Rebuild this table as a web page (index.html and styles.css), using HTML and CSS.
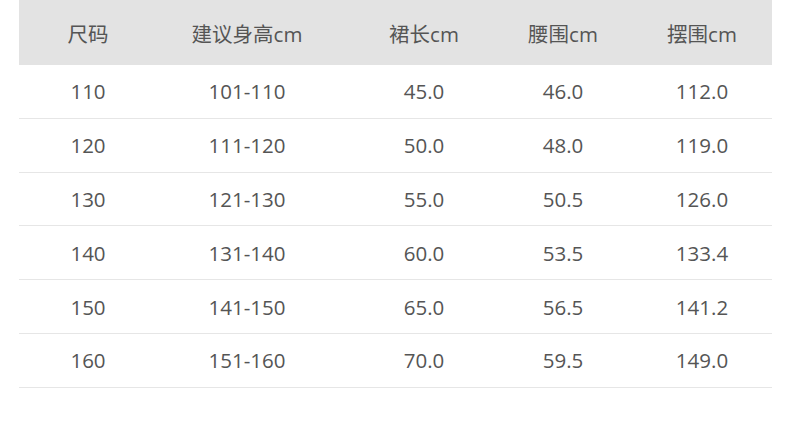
FILE: index.html
```html
<!DOCTYPE html>
<html lang="zh">
<head>
<meta charset="utf-8">
<link rel="stylesheet" href="styles.css">
</head>
<body>
<div class="table">
  <div class="row head">
    <div class="c c1">尺码</div><div class="c c2">建议身高cm</div><div class="c c3">裙长cm</div><div class="c c4">腰围cm</div><div class="c c5">摆围cm</div>
  </div>
  <div class="row"><div class="c c1">110</div><div class="c c2">101-110</div><div class="c c3">45.0</div><div class="c c4">46.0</div><div class="c c5">112.0</div></div>
  <div class="row"><div class="c c1">120</div><div class="c c2">111-120</div><div class="c c3">50.0</div><div class="c c4">48.0</div><div class="c c5">119.0</div></div>
  <div class="row"><div class="c c1">130</div><div class="c c2">121-130</div><div class="c c3">55.0</div><div class="c c4">50.5</div><div class="c c5">126.0</div></div>
  <div class="row"><div class="c c1">140</div><div class="c c2">131-140</div><div class="c c3">60.0</div><div class="c c4">53.5</div><div class="c c5">133.4</div></div>
  <div class="row"><div class="c c1">150</div><div class="c c2">141-150</div><div class="c c3">65.0</div><div class="c c4">56.5</div><div class="c c5">141.2</div></div>
  <div class="row"><div class="c c1">160</div><div class="c c2">151-160</div><div class="c c3">70.0</div><div class="c c4">59.5</div><div class="c c5">149.0</div></div>
</div>
</body>
</html>
```
FILE: styles.css
```css
html, body {
  margin: 0;
  padding: 0;
  background: #ffffff;
}
body {
  font-family: "Open Sans", "Noto Sans CJK SC", sans-serif;
  font-size: 20.5px;
  color: #555555;
}
.table {
  margin-left: 19px;
  width: 753px;
}
.row {
  display: grid;
  grid-template-columns: 138px 180px 174px 104px 157px;
  height: 53.8px;
  box-sizing: border-box;
  border-bottom: 1px solid #e6e6e6;
}
.row.head {
  height: 65px;
  background: #e3e3e3;
  border-bottom: none;
}
.c {
  display: flex;
  align-items: center;
  justify-content: center;
  white-space: nowrap;
}
.c5 {
  padding-left: 17px;
}
```
